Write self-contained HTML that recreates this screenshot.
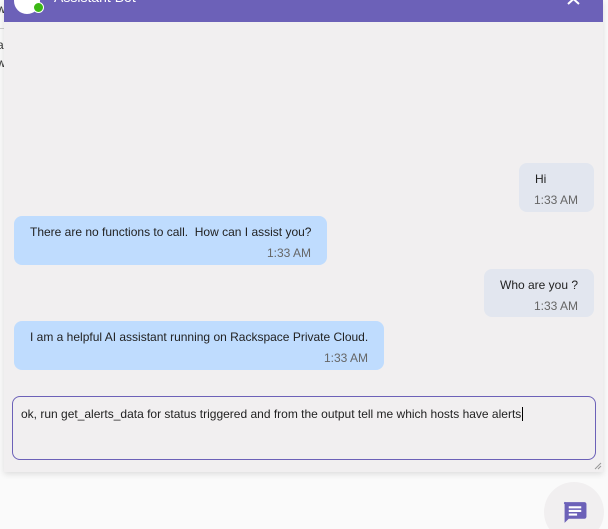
<!DOCTYPE html>
<html><head><style>
html,body{margin:0;width:608px;height:529px;overflow:hidden}
body{background:#fafafa;position:relative;font-family:"Liberation Sans",sans-serif;}
.bgtxt{position:absolute;left:-3px;font-size:12px;color:#333}
.panel{position:absolute;left:4px;top:0;width:599px;height:472px;background:#f1eff0;box-shadow:0 2px 6px rgba(0,0,0,.12);}
.hdr{position:absolute;left:0;top:0;width:100%;height:22px;background:#6c61b8;}
.b{position:absolute;border-radius:8px;font-size:12px;color:#222;}
.b .t{position:absolute;right:16px;font-size:12px;color:#666}
.u{background:#e2e6ef}.a{background:#bfdcfe}
</style></head><body>
<div class="bgtxt" style="top:2px">w</div>
<div class="bgtxt" style="top:38px">al</div>
<div class="bgtxt" style="top:56px">w</div>
<div style="position:absolute;left:0;top:28px;width:5px;height:1px;background:#ccc"></div>
<div class="panel">
<div class="hdr">
 <div style="position:absolute;left:10px;top:-12px;width:26px;height:26px;border-radius:50%;background:#fff"></div>
 <div style="position:absolute;left:29px;top:2px;width:9px;height:9px;border-radius:50%;background:#3cb815;border:1.5px solid #fff"></div>
 <div style="position:absolute;left:50px;top:-11px;color:#fff;font-size:14px">Assistant Bot</div>
 <svg style="position:absolute;left:563px;top:-6px" width="14" height="12"><path d="M1 0L12 10M12 0L1 10" stroke="#fff" stroke-width="2"/></svg>
</div>
<div class="b u" style="left:515px;top:163px;width:75px;height:49px"><span style="position:absolute;left:16px;top:9px">Hi</span><span class="t" style="top:30px">1:33 AM</span></div>
<div class="b a" style="left:10px;top:216px;width:313px;height:49px"><span style="position:absolute;left:16px;top:9px">There are no functions to call.&nbsp; How can I assist you?</span><span class="t" style="top:30px">1:33 AM</span></div>
<div class="b u" style="left:480px;top:269px;width:110px;height:48px"><span style="position:absolute;left:16px;top:9px">Who are you ?</span><span class="t" style="top:30px">1:33 AM</span></div>
<div class="b a" style="left:10px;top:321px;width:370px;height:49px"><span style="position:absolute;left:16px;top:9px">I am a helpful AI assistant running on Rackspace Private Cloud.</span><span class="t" style="top:30px">1:33 AM</span></div>
<div style="position:absolute;left:8px;top:396px;width:582px;height:62px;border:1px solid #6c61b8;border-radius:8px;font-size:12px;color:#222"><span style="position:absolute;left:8px;top:10px">ok, run get_alerts_data for status triggered and from the output tell me which hosts have alerts<span style="border-left:1px solid #000;margin-left:1px"></span></span></div>
<svg style="position:absolute;left:590px;top:462px" width="8" height="8"><path d="M1 7L7 1M4 7L7 4" stroke="#999" stroke-width="1"/></svg>
</div>
<div style="position:absolute;left:544px;top:482px;width:60px;height:60px;border-radius:50%;background:#f1eff0"></div>
<svg style="position:absolute;left:562px;top:500px" width="26" height="25" viewBox="0 0 24 24"><path d="M3 2h18a2 2 0 0 1 2 2v12a2 2 0 0 1-2 2H6l-4 4V4a1 1 0 0 1 1-2z" fill="#6c61b8"/><path d="M6 7h12M6 10.5h12M6 14h8" stroke="#fff" stroke-width="2"/></svg>
</body></html>
